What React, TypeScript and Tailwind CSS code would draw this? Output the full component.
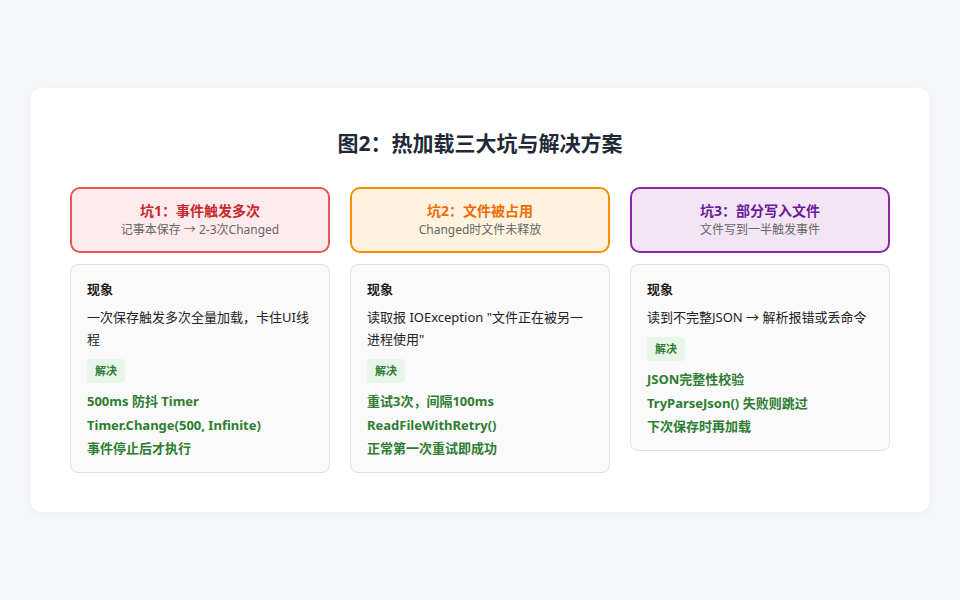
import React from "react";

const cols = [
  {
    title: "坑1：事件触发多次",
    sub: "记事本保存 → 2-3次Changed",
    head: "border-[#ef5350] bg-[#ffebee]",
    titleColor: "text-[#c62828]",
    desc: "一次保存触发多次全量加载，卡住UI线程",
    fix: ["500ms 防抖 Timer", "Timer.Change(500, Infinite)", "事件停止后才执行"],
  },
  {
    title: "坑2：文件被占用",
    sub: "Changed时文件未释放",
    head: "border-[#fb8c00] bg-[#fff3e0]",
    titleColor: "text-[#ef6c00]",
    desc: "读取报 IOException \"文件正在被另一进程使用\"",
    fix: ["重试3次，间隔100ms", "ReadFileWithRetry()", "正常第一次重试即成功"],
  },
  {
    title: "坑3：部分写入文件",
    sub: "文件写到一半触发事件",
    head: "border-[#8e24aa] bg-[#f3e5f5]",
    titleColor: "text-[#6a1b9a]",
    desc: "读到不完整JSON → 解析报错或丢命令",
    fix: ["JSON完整性校验", "TryParseJson() 失败则跳过", "下次保存时再加载"],
  },
];

export default function App() {
  return (
    <div
      className="w-[960px] h-[600px] bg-[#f5f6fa] pt-[88px] px-[30px]"
      style={{ fontFamily: '"Noto Sans", "Noto Sans CJK SC", sans-serif' }}
    >
      <div className="bg-white rounded-xl h-[424px] px-10 pt-[40px] shadow-[0_2px_8px_rgba(0,0,0,0.04)]">
        <h1 className="text-center text-[21px] font-bold text-[#1f2937] leading-[30px] mb-[29px]">
          图2：热加载三大坑与解决方案
        </h1>
        <div className="grid grid-cols-3 gap-5 items-start">
          {cols.map((c) => (
            <div key={c.title} className="flex flex-col gap-[11px]">
              <div className={`h-[66px] border-2 rounded-[10px] flex flex-col items-center justify-center ${c.head}`}>
                <div className={`text-[14px] font-bold leading-[20px] ${c.titleColor}`}>{c.title}</div>
                <div className="text-[12px] text-[#666] leading-[18px]">{c.sub}</div>
              </div>
              <div className="border border-[#e0e0e0] bg-[#fafafa] rounded-lg px-4 pt-[13px] pb-[13px] text-[13px] text-[#222]">
                <div className="font-bold leading-[22px]">现象</div>
                <div className="leading-[22px] mt-[6px]">{c.desc}</div>
                <div className="mt-[9px] mb-[6px] inline-block bg-[#e8f5e9] text-[#2e7d32] text-[11px] font-bold rounded px-2 leading-[24px]">
                  解决
                </div>
                {c.fix.map((f, i) => (
                  <div key={f} className={`text-[#2e7d32] font-bold ${i === 2 ? "leading-[22px]" : "leading-[24px]"}`}>
                    {f}
                  </div>
                ))}
              </div>
            </div>
          ))}
        </div>
      </div>
    </div>
  );
}
